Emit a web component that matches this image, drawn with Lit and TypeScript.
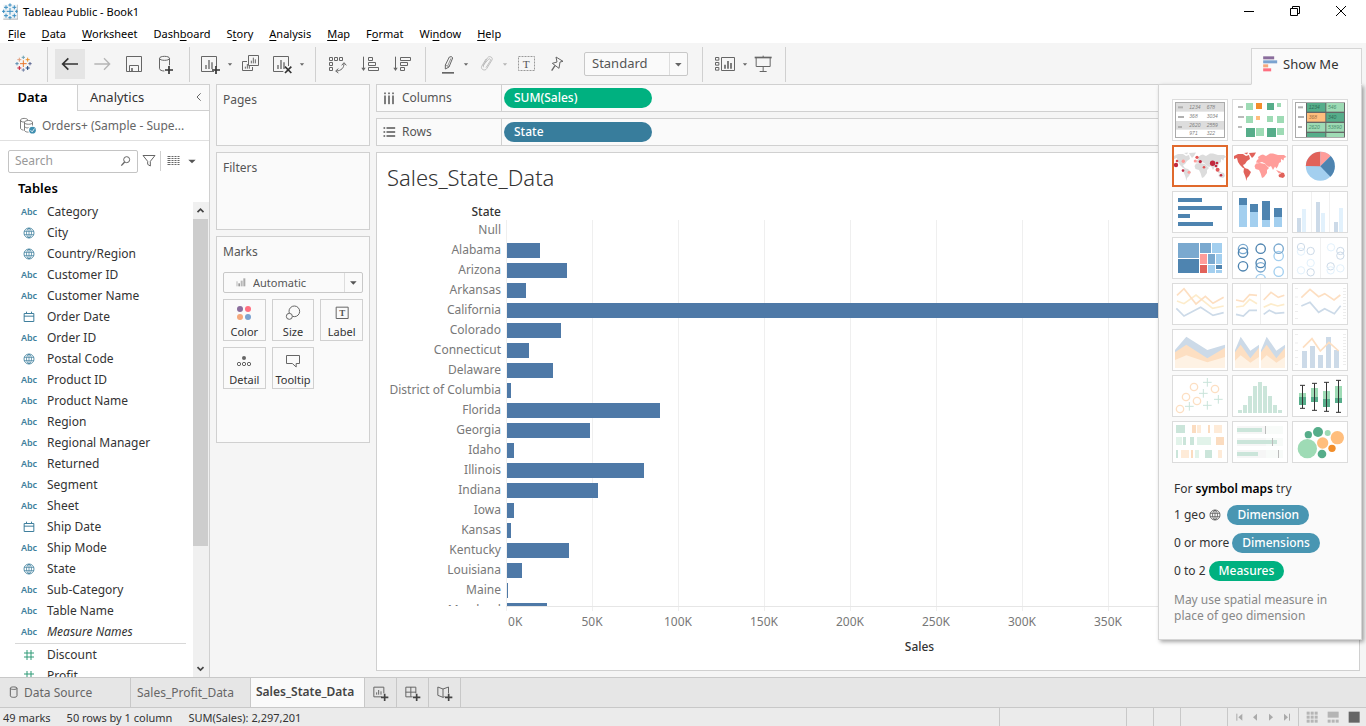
import { LitElement, html, svg, css, nothing } from "lit";
import { customElement, state } from "lit/decorators.js";
import { classMap } from "lit/directives/class-map.js";

/* Icon artwork is drawn on a fine grid of three units per CSS pixel. */
const icon = (w: number, h: number, cx: number, cy: number, art: unknown, cls = "") =>
  html`<svg class=${"ico " + cls} width=${w} height=${h} viewBox="${cx - w * 1.5} ${cy - h * 1.5} ${w * 3} ${h * 3}" aria-hidden="true">${art}</svg>`;

const line = (d: string, color = "#666", width = 3) =>
  svg`<path d=${d} fill="none" stroke=${color} stroke-width=${width}></path>`;
const area = (d: string, color: string) => svg`<path d=${d} fill=${color}></path>`;
const box = (x: number, y: number, w: number, h: number, color: string) =>
  svg`<rect x=${x} y=${y} width=${w} height=${h} fill=${color}></rect>`;
const dot = (x: number, y: number, r: number, color: string) =>
  svg`<circle cx=${x} cy=${y} r=${r} fill=${color}></circle>`;
const ring = (x: number, y: number, r: number, color: string, width = 3) =>
  svg`<circle cx=${x} cy=${y} r=${r} fill="none" stroke=${color} stroke-width=${width}></circle>`;
const plus = (x: number, y: number, r: number, color: string, width = 3) =>
  line(`M${x - r} ${y}H${x + r}M${x} ${y - r}V${y + r}`, color, width);

const logo = (x: number, y: number, c: string[]) => svg`
  ${plus(x, y, 10, c[0], 3)}
  ${plus(x, y - 19, 5, c[1], 3)}${plus(x, y + 19, 5, c[2], 3)}
  ${plus(x - 19, y, 5, c[3], 3)}${plus(x + 20, y, 5, c[4], 3)}
  ${plus(x - 12, y - 12, 6, c[5], 3)}${plus(x + 13, y - 12, 6, c[6], 3)}
  ${plus(x - 12, y + 13, 6, c[7], 3)}${plus(x + 13, y + 13, 6, c[8], 3)}`;

const caret = (color = "#666") => icon(8, 24, 12, 36, area("M5.500 34H18.500L12 41Z", color));
const bars = (x: number, y: number) => line(`M${x} ${y - 12}V${y}M${x + 9} ${y - 27}V${y}M${x + 18} ${y - 20}V${y}`, "#666", 4);

const I = {
  back: icon(24, 24, 210, 192, line("M189 192H234M205 175L188 192L205 209", "#333", 5)),
  forward: icon(24, 24, 306, 192, line("M283 192H328M312 175L329 192L312 209", "#b5b5b5", 4)),
  save: icon(24, 24, 402, 192, [line("M379.500 169.500H424.500V214.500H379.500Z"), line("M388.500 214V196.500H415.500V214"), line("M396 204V213", "#666", 5)]),
  source: icon(24, 24, 498, 192, [
    line("M478.500 175C478.500 167 508.500 167 508.500 175C508.500 183 478.500 183 478.500 175V206C478.500 210 486 213 493 213M508.500 175V196"),
    plus(507, 210, 12, "#333", 5),
  ]),
  addSheet: icon(24, 24, 630, 192, [line("M642 214.500H604.500V169.500H649.500V200"), bars(618, 207), plus(648, 210, 12, "#333", 5)]),
  duplicate: icon(26, 24, 753, 192, [
    line("M748.500 166.500H778.500V196.500H748.500Z"), line("M757 182V190M763 173V190M769 178V190"),
    line("M744 184.500H730.500V211.500H760.500V201"), line("M739 200V206M745 192V206M751 198V206"),
  ]),
  clear: icon(24, 24, 846, 192, [line("M850 214.500H820.500V169.500H865.500V198"), bars(834, 207), line("M855 200L874 219M874 200L855 219", "#333", 5)]),
  swap: icon(24, 24, 1011, 192, [
    line("M988.500 172.500h9v9h-9zM1003.500 172.500h9v9h-9zM1018.500 172.500h9v9h-9zM988.500 187.500h9v9h-9zM988.500 202.500h9v9h-9z"),
    line("M1032 190C1032 204 1024 212 1009 213M1025 196L1032 188L1039 196M1015 206L1007 213L1015 219"),
  ]),
  sortAsc: icon(24, 24, 1107, 192, [line("M1090.500 170V208"), area("M1084 203H1097L1090.500 213Z", "#666"), line("M1105.500 172.500h12v9h-12zM1105.500 187.500h21v9h-21zM1105.500 202.500h30v9h-30z")]),
  sortDesc: icon(24, 24, 1203, 192, [line("M1186.500 170V208"), area("M1180 203H1193L1186.500 213Z", "#666"), line("M1201.500 172.500h30v9h-30zM1201.500 187.500h21v9h-21zM1201.500 202.500h12v9h-12z")]),
  pen: icon(24, 24, 144, 72, [line("M148 51Q156 47 158 54L147 81L136 87V75Z"), line("M136 75L147 81M143 78L153 55", "#666", 2), box(126, 96, 36, 5, "#666")]),
  clip: icon(24, 24, 255, 72, line("M243 78L256 54C261 46 274 51 270 60L254 86C250 94 235 89 239 79L252 57M246 82C242 80 244 76 247 72L259 58C263 54 268 58 264 64L252 83", "#b5b5b5", 2.5)),
  text: icon(24, 24, 381, 72, [
    svg`<rect x="358.500" y="49.500" width="48" height="42" fill="none" stroke="#999" stroke-width="3" stroke-dasharray="6 3"></rect>`,
    svg`<text x="382" y="83" text-anchor="middle" font-family="Liberation Serif, serif" font-size="34" fill="#555">T</text>`,
  ]),
  pin: icon(24, 24, 471, 72, [line("M468 51L489 64L480 66L477 85L457 70L471 66Z"), line("M465 77L455 92", "#666", 4)]),
  cards: icon(26, 24, 978, 72, [
    line("M949.500 52.500h10v8h-10zM949.500 67.500h10v8h-10zM949.500 82.500h10v8h-10z"), line("M967.500 52.500H1006.500V91.500H967.500Z"),
    line("M978 74V86M987 63V86M996 69V86", "#666", 5),
  ]),
  present: icon(24, 24, 1096, 72, [line("M1071 52.500H1122", "#666", 5), line("M1075.500 53V79.500H1117.500V53M1096.500 47V52M1096.500 80V94M1086 94.500H1107")]),
};

const globe = (color: string) => icon(12, 12, 18, 18, [ring(18, 18, 15, color, 2.6), line("M18 3V33M3.500 13H32.500M3.500 23H32.500M18 3C8 10 8 26 18 33M18 3C28 10 28 26 18 33", color, 2.2)]);
const fieldIcon: Record<string, unknown> = {
  abc: html`<span class="abc">Abc</span>`,
  geo: globe("#3f7f9d"),
  date: icon(12, 12, 18, 18, line("M3.500 7.500H32.500V31.500H3.500ZM3 15.500H33M10.500 2V8M25.500 2V8", "#3f7f9d")),
  num: icon(12, 12, 18, 18, line("M12 3V33M24 3V33M3 12H33M3 24H33", "#2f9a77", 3)),
};

const FIELDS: [string, string][] = [
  ["abc", "Category"], ["geo", "City"], ["geo", "Country/Region"], ["abc", "Customer ID"], ["abc", "Customer Name"],
  ["date", "Order Date"], ["abc", "Order ID"], ["geo", "Postal Code"], ["abc", "Product ID"], ["abc", "Product Name"],
  ["abc", "Region"], ["abc", "Regional Manager"], ["abc", "Returned"], ["abc", "Segment"], ["abc", "Sheet"],
  ["date", "Ship Date"], ["abc", "Ship Mode"], ["geo", "State"], ["abc", "Sub-Category"], ["abc", "Table Name"], ["abc", "Measure Names"],
];
const MEASURES: [string, string][] = [["num", "Discount"], ["num", "Profit"]];

const SALES: [string, number][] = [
  ["Null", 0], ["Alabama", 19511], ["Arizona", 35282], ["Arkansas", 11300], ["California", 457688], ["Colorado", 31500],
  ["Connecticut", 13000], ["Delaware", 27000], ["District of Columbia", 2500], ["Florida", 89200], ["Georgia", 48500], ["Idaho", 4382],
  ["Illinois", 80000], ["Indiana", 53100], ["Iowa", 4300], ["Kansas", 2500], ["Kentucky", 36200], ["Louisiana", 9000], ["Maine", 800], ["Maryland", 23500],
];
const STEP = 86;

const land = [
  "M2 11L6 9L11 9L14 11L17 10L18 14L15 16L13 19L11 20L12 22L14 24L11 23L8 20L6 17L5 13L2 14Z",
  "M12 8L16 7.500L15 9.500ZM17 8L24 7.500L22 11L20 13L18 10Z",
  "M12 23L16 24L19 27L17 31L15 33L14.500 36L13.500 32L11.500 27Z",
  "M22.500 21L24 18.500L28 18L33 19L37 23L35 25L35 28L32 32L30 33L28.500 28L27 25L23.500 24Z",
  "M24 17.500L25 15L26.500 14L26 12L29 10L31 9.500L34 11L38 8.500L41 8.500L46 10L52 10L54.500 12L52 13L51.500 15.500L49 14L49 17L47 18L46 21L44.500 23.500L43 21.500L41 25L39 21L37 22L34 20L33 18.500L30 17L27 18Z",
  "M44 25L47 26L50 27.500L47 28.500Z",
  "M46.500 30L50 27.500L52 28L53 31L51 33L47 32Z",
];
const spots: [number, number, number, string][] = [
  [4, 20, 2.2, "#c2293f"], [5, 16, 1.3, "#d8494f"], [11.3, 16.3, 1.7, "#ff9d9a"], [25, 12.3, 1.6, "#e15759"], [23.3, 16, 1.6, "#ff9d9a"],
  [28.3, 16.6, 1.6, "#c2293f"], [40.6, 18.3, 2.7, "#c2293f"], [45, 18, 1.3, "#c2293f"], [44, 21, 1.3, "#c2293f"], [45.600, 24.800, 2, "#e15759"],
  [32, 22.300, 1.3, "#e15759"], [11, 25.600, 1.3, "#c2293f"], [17, 27.300, 1.5, "#ff9d9a"], [49, 30.300, 1.3, "#c2293f"],
];
const num = (x: number, y: number, t: string, c = "#808080") =>
  svg`<text x=${x} y=${y} font-family="Liberation Sans, sans-serif" font-style="italic" font-size="15" fill=${c}>${t}</text>`;

const B = "#4e84b0", M = "#7aa9cf", L = "#a3cfef", DG = "#56ad8a", LG = "#9edbb5";

/* Each chart type: name, artwork origin, artwork. */
const CHARTS: [string, number, number, unknown][] = [
  ["text table", 66, 297, [
    box(75, 306, 150, 108, "#aaa"), box(78, 309, 144, 102, "#fff"), box(78, 309, 144, 26, "#ddd"), box(78, 363, 144, 26, "#ddd"),
    box(84, 319, 15, 6, "#b0b0b0"), box(84, 348, 18, 6, "#b0b0b0"), box(84, 378, 12, 6, "#b0b0b0"),
    num(118, 328, "1234"), num(170, 328, "678"), num(118, 355, "368"), num(170, 355, "3034"),
    num(118, 382, "2620"), num(170, 382, "2559"), num(118, 406, "971"), num(170, 406, "322"),
  ]],
  ["heat map", 246, 297, [
    box(264, 318, 15, 6, "#bbb"), box(264, 348, 18, 6, "#bbb"), box(264, 378, 12, 6, "#bbb"),
    box(288, 309, 21, 21, LG), box(318, 309, 18, 18, "#f28e2b"), box(351, 309, 21, 21, DG), box(381, 309, 12, 12, LG),
    box(288, 348, 21, 21, LG), box(318, 348, 12, 12, "#ffbe7d"), box(351, 348, 18, 18, LG), box(381, 348, 21, 21, LG),
    box(288, 384, 27, 27, DG), box(318, 384, 24, 24, LG), box(351, 384, 27, 27, DG), box(381, 384, 21, 21, LG),
  ]],
  ["highlight table", 426, 297, [
    box(435, 306, 150, 108, "#aaa"), box(438, 309, 30, 102, "#fff"), box(468, 309, 117, 102, "#666"),
    box(471, 309, 55, 26, DG), box(529, 309, 53, 26, LG), box(471, 339, 55, 26, "#ffbe7d"), box(529, 339, 53, 26, DG),
    box(471, 369, 55, 26, LG), box(529, 369, 53, 26, LG), box(471, 399, 55, 12, DG), box(529, 399, 53, 12, LG),
    box(444, 319, 15, 6, "#b0b0b0"), box(444, 348, 18, 6, "#b0b0b0"), box(444, 378, 12, 6, "#b0b0b0"),
    num(476, 327, "1234", "#2f6b54"), num(534, 327, "546", "#488d6c"), num(476, 357, "368", "#9a6a3c"), num(534, 357, "340", "#2f6b54"),
    num(476, 387, "2620", "#488d6c"), num(534, 387, "53890", "#488d6c"),
  ]],
  ["symbol map", 66, 435, svg`<g transform="translate(66 435) scale(3)">${land.map((d) => area(d, "#dcdcdc"))}${spots.map((s) => dot(...s))}</g>`],
  ["filled map", 246, 435, svg`<g transform="translate(246 435) scale(3)">${land.map((d, i) => area(d, [3, 4, 5].includes(i) ? "#ff9d9a" : "#e1625a"))}</g>`],
  ["pie chart", 426, 435, [
    dot(511, 499, 43.500, L), area("M511 499V455.500A43.500 43.500 0 0 0 467.500 498Z", "#e1625a"),
    area("M511 499V455.500A43.500 43.500 0 0 1 542 468Z", "#ff9d9a"), area("M511 499L542 468A43.500 43.500 0 0 1 541 530Z", B),
  ]],
  ["horizontal bars", 66, 573, [box(84, 594, 72, 12, B), box(84, 618, 132, 12, B), box(84, 642, 36, 12, B), box(84, 666, 105, 12, B)]],
  ["stacked bars", 246, 573, [
    box(267, 594, 24, 21, B), box(267, 615, 24, 66, L), box(300, 612, 24, 24, B), box(300, 636, 24, 45, L),
    box(336, 603, 24, 57, B), box(336, 660, 24, 21, L), box(372, 624, 24, 27, B), box(372, 651, 24, 30, L),
  ]],
  ["side-by-side bars", 426, 573, [
    box(483, 576, 3, 120, "#f0f0f0"), box(537, 576, 3, 120, "#f0f0f0"),
    box(441, 654, 12, 42, "#ccdae8"), box(456, 627, 12, 69, "#e2f1fc"), box(498, 606, 12, 90, "#ccdae8"), box(513, 639, 12, 57, "#e2f1fc"),
    box(552, 666, 12, 30, "#ccdae8"), box(567, 624, 12, 72, "#e2f1fc"),
  ]],
  ["treemap", 66, 6, [
    box(84, 24, 63, 45, M), box(84, 72, 63, 42, B), box(150, 24, 33, 30, M), box(186, 24, 30, 30, L),
    box(150, 57, 21, 30, "#ff9d9a"), box(174, 57, 21, 30, M), box(198, 57, 18, 30, L),
    box(150, 90, 21, 24, "#e1625a"), box(174, 90, 21, 24, L), box(198, 90, 18, 12, B), box(198, 105, 18, 9, L),
  ]],
  ["circle views", 246, 6, [
    ring(279, 42, 14, M, 4), ring(279, 53, 14, B, 4), ring(279, 94, 14, B, 4), ring(332, 41, 14, B, 4), ring(332, 97, 14, M, 4), ring(332, 84, 14, B, 4),
    ring(332, 132, 14, L, 4), ring(386, 63, 14, L, 4), ring(386, 41, 14, M, 4), ring(386, 110, 14, L, 4),
  ]],
  ["side-by-side circles", 426, 6, [
    box(510, 9, 3, 120, "#f0f0f0"), ring(453, 50, 11, "#e2f1fc"), ring(453, 36, 11, "#ccdae8"), ring(482, 48, 11, "#ccdae8"),
    ring(482, 84, 11, "#e2f1fc"), ring(453, 106, 11, "#e2f1fc"), ring(482, 112, 11, "#ccdae8"),
    ring(543, 37, 11, "#e2f1fc"), ring(571, 48, 11, "#ccdae8"), ring(571, 62, 11, "#ccdae8"),
    ring(542, 94, 11, "#ccdae8"), ring(542, 106, 11, "#e2f1fc"), ring(571, 100, 11, "#e2f1fc"),
  ]],
  ["continuous lines", 66, 144, [
    line("M81 198L102 206L138 180L188 220L221 213", "#fdeccb", 5), line("M81 181L102 161L138 207L166 184L189 205L221 187", "#fddfc2", 5),
    line("M79 220L102 243L152 217L189 241L221 233", "#ccdae8", 5),
  ]],
  ["discrete lines", 246, 144, [
    box(330, 147, 3, 120, "#eee"), line("M258 195L280 200L299 179L321 181M341 195L363 172L385 187L403 181", "#fddfc2", 5),
    line("M258 216L280 213L299 193L321 206M341 217L363 207L383 213L403 208", "#fdeccb", 5),
    line("M258 238L280 243L298 226L321 226M341 238L358 226L377 235L403 233", "#ccdae8", 5),
  ]],
  ["dual lines", 426, 144, [
    line("M454 188L480 163L506 185L524 176L552 195L571 180", "#fddfc2", 5), line("M454 213L480 202L506 232L524 221L553 236L572 212", "#ccdae8", 5),
    [160, 185, 208, 229, 250].map((y) => box(435, y, 9, 2, "#e5e5e5")), [160, 169, 178, 187, 196, 205, 214, 223, 232, 241, 250].map((y) => box(579, y, 9, 2, "#e5e5e5")),
  ]],
  ["continuous area", 66, 282, [
    area("M75 345L109 305L172 345L225 329V399H75Z", "#ccdae8"), area("M75 352L109 329L172 370L225 338V399H75Z", "#fddfc2"), area("M75 375L109 361L172 382L225 366V399H75Z", "#fef2e4"),
  ]],
  ["discrete area", 246, 282, [255, 333].map((x) => [
    area(`M${x} 346L${x + 17} 305L${x + 46} 347L${x + 72} 329V399H${x}Z`, "#ccdae8"),
    area(`M${x} 352L${x + 17} 329L${x + 46} 370L${x + 72} 338V399H${x}Z`, "#fddfc2"),
    area(`M${x} 377L${x + 17} 361L${x + 46} 383L${x + 72} 366V399H${x}Z`, "#fef2e4"),
  ])],
  ["dual combination", 426, 282, [
    box(456, 348, 15, 51, "#ccdae8"), box(480, 333, 15, 66, "#ccdae8"), box(504, 360, 15, 39, "#ccdae8"), box(528, 306, 15, 93, "#ccdae8"), box(552, 345, 15, 54, "#ccdae8"),
    line("M459 338L486 311L511 348L537 322L566 348", "#fddfc2", 5),
    [298, 323, 346, 367, 388].map((y) => box(435, y, 9, 2, "#e5e5e5")), [298, 307, 316, 325, 334, 343, 352, 361, 370, 379, 388].map((y) => box(579, y, 9, 2, "#e5e5e5")),
  ]],
  ["scatter plot", 66, 420, [
    [[132, 456], [195, 462], [108, 486], [141, 498], [90, 522]].map(([x, y]) => ring(x, y, 11, "#fddfc2", 4)),
    [[172, 442], [160, 475], [205, 493], [118, 514], [172, 511]].map(([x, y]) => plus(x, y, 13, "#c9e4da", 3)),
  ]],
  ["histogram", 246, 420, [
    [264, 525], [279, 510], [294, 483], [309, 453], [324, 441], [339, 453], [354, 483], [369, 510], [384, 525],
  ].map(([x, y]) => box(x, y, 12, 534 - y, "#cbe5da"))],
  ["box-and-whisker plot", 426, 420, [
    [447, 474, 486, 510, 451, 520], [483, 459, 486, 501, 445, 526], [519, 468, 492, 516, 442, 529], [555, 453, 489, 504, 436, 532],
  ].map(([x, a, b, c, t, u]) => [
    box(x, a, 21, b - a, LG), box(x, b, 21, c - b, DG), line(`M${x + 3} ${t}H${x + 18}M${x + 10.500} ${t}V${u}M${x + 3} ${u}H${x + 18}`, "#333", 3),
  ])],
  ["Gantt chart", 66, 558, [
    box(78, 570, 27, 24, "#cbe5da"), box(126, 570, 12, 24, "#fbdcc0"), box(141, 570, 12, 24, "#feebd8"), box(174, 570, 6, 24, "#fbdcc0"), box(192, 570, 24, 24, "#feebd8"),
    box(78, 606, 18, 24, "#e2f3ea"), box(99, 606, 9, 24, "#cbe5da"), box(120, 606, 12, 24, "#cbe5da"), box(141, 606, 42, 24, "#e2f3ea"), box(198, 606, 24, 24, "#fbdcc0"),
    box(78, 645, 6, 24, "#cbe5da"), box(93, 645, 24, 24, "#feebd8"), box(123, 645, 6, 24, "#fbdcc0"), box(135, 645, 12, 24, "#e2f3ea"), box(165, 645, 21, 24, "#cbe5da"), box(204, 645, 12, 24, "#feebd8"),
  ]],
  ["bullet graph", 246, 558, [
    [573, 75, 346], [609, 120, 367], [645, 63, 385],
  ].map(([y, w, m]) => [box(261, y, 138, 24, "#f8fbf9"), box(261, y, 87, 24, "#f6f6f6"), box(261, y + 6, w, 12, "#cbe5da"), box(m - 1, y, 3, 24, "#bbb")])],
  ["packed bubbles", 426, 558, [
    dot(472, 641, 29, LG), dot(475, 599, 11, DG), dot(504, 591, 15, DG), dot(533, 594, 9, LG), dot(562, 608, 20, "#ffbe7d"),
    dot(518, 624, 17, "#ffbe7d"), dot(546, 640, 11, "#f28e2b"), dot(516, 657, 13, DG),
  ]],
];

const MENUS: [string, string, string][] = [
  ["", "F", "ile"], ["", "D", "ata"], ["", "W", "orksheet"], ["Dash", "b", "oard"], ["S", "t", "ory"],
  ["", "A", "nalysis"], ["", "M", "ap"], ["F", "o", "rmat"], ["Wi", "n", "dow"], ["", "H", "elp"],
];

@customElement("app-root")
export class AppRoot extends LitElement {
  @state() private chart = "symbol map";

  static styles = css`
    :host { display: flex; flex-direction: column; height: 100vh; overflow: hidden; position: relative; background: #f5f5f5; color: #333; font: 12px/16px "Noto Sans", "Open Sans", sans-serif; }
    * { box-sizing: border-box; }
    button, select, input { font: inherit; color: inherit; margin: 0; padding: 0; border: 0; background: none; border-radius: 0; }
    .ico { display: block; flex: none; }

    .title { display: flex; align-items: center; height: 24px; padding: 0 2px; background: #fff; color: #000; font-size: 11px; flex: none; }
    .title h1 { font: inherit; margin: 0 0 0 5px; flex: 1; }
    .title button { width: 46px; height: 21px; align-self: flex-start; display: grid; place-items: center; }
    .menu { display: flex; height: 19px; background: #fff; color: #000; font-size: 11px; line-height: 19px; flex: none; }
    .menu button { padding: 0 8px; white-space: nowrap; }
    .menu u { text-underline-offset: 2px; }

    .toolbar { display: flex; align-items: flex-start; height: 41px; flex: none; }
    .group { display: flex; height: 35px; margin-top: 4px; padding: 2px 7px 0 6px; border-right: 1px solid #d0d0d0; }
    .group button { width: 30px; height: 30px; margin: 0 1px; display: grid; place-items: center; }
    .group button.on { background: #e5e5e5; }
    .group button.drop { width: 8px; margin: 0; }
    .group button.tight { width: 28px; margin: 0; }
    .brand { padding-left: 8px; padding-right: 7px; }
    .sheet { padding-left: 4px; padding-right: 9px; }
    .order { padding-left: 5px; padding-right: 8px; }
    .format { padding-left: 8px; padding-right: 14px; gap: 3px; }
    .split { display: flex; }
    .view-tools { padding-left: 6px; padding-right: 8px; }
    .pick { display: grid; grid-template-columns: 1fr 18px; border: 1px solid #c8c8c8; border-radius: 2px; background: #fafafa; color: #555; }
    .pick select { grid-area: 1 / 1 / 2 / 3; appearance: none; outline: none; }
    .pick .ico { grid-area: 1 / 2; pointer-events: none; border-left: 1px solid #ddd; place-self: stretch; width: 18px; height: 100%; }
    .format .fit { width: 104px; height: 24px; margin: 3px 0 0 10px; font-size: 13px; }
    .fit select { padding: 0 0 2px 7px; }

    .work { flex: 1; min-height: 0; display: grid; grid-template-columns: 210px 154px 1fr; column-gap: 6px; padding-right: 6px; }

    .pane { display: flex; flex-direction: column; min-height: 0; background: #fff; border: 1px solid #d0d0d0; border-width: 1px 1px 0 0; }
    .pane-tabs { display: flex; font-size: 13px; height: 26px; flex: none; }
    .pane-tabs button { padding-bottom: 2px; }
    .pane-tabs button:first-child { width: 77px; padding-right: 12px; font-weight: 600; color: #000; }
    .pane-tabs button:last-child { flex: 1; display: flex; align-items: center; justify-content: space-between; padding: 0 6px 1px 12px; background: #fafafa; border: 1px solid #d0d0d0; border-width: 0 0 1px 1px; }
    .source { display: flex; align-items: center; gap: 6px; height: 30px; padding-left: 19px; border-bottom: 1px solid #e0e0e0; color: #666; flex: none; width: 100%; }
    .find { display: flex; align-items: center; height: 38px; padding: 2px 0 0 8px; flex: none; }
    .find label { display: flex; align-items: center; width: 130px; height: 23px; border: 1px solid #c4c4c4; border-radius: 2px; padding: 0 5px 0 6px; }
    .find input { width: 100%; min-width: 0; outline: none; }
    .find input::placeholder { color: #999; }
    .find button { display: grid; place-items: center; width: 22px; height: 20px; }
    .find button.list { width: 41px; border-left: 1px solid #d0d0d0; display: flex; align-items: center; gap: 7px; padding-left: 6px; }
    h2 { font: 600 13px/18px "Noto Sans", "Open Sans", sans-serif; color: #000; margin: 0; padding-left: 18px; height: 23px; flex: none; }
    .lists { display: flex; flex: 1; min-height: 0; }
    .fields { flex: 1; overflow: hidden; }
    ul { list-style: none; margin: 0; padding: 0; }
    .fields ul + ul { border-top: 1px solid #d8d8d8; padding-top: 1px; margin: 0 7px 0 15px; }
    .fields ul + ul li { padding-left: 5px; }
    .fields li { display: grid; grid-template-columns: 18px 1fr; column-gap: 9px; align-items: center; height: 21px; padding: 0 0 2px 20px; white-space: nowrap; }
    .fields li .ico { justify-self: center; margin-top: 1px; }
    .fields li.names { font-style: italic; }
    .abc { font: 600 9px/12px "Noto Sans", sans-serif; color: #3f7f9d; text-align: center; padding-top: 1px; }
    .scroll { width: 16px; background: #f0f0f0; display: flex; flex-direction: column; justify-content: space-between; flex: none; }
    .scroll button { display: grid; place-items: center; height: 17px; width: 15px; }
    .thumb { background: #cdcdcd; flex: 0 0 327px; width: 15px; margin-bottom: auto; }

    .cards { display: flex; flex-direction: column; gap: 6px; }
    .card { background: #fafafa; border: 1px solid #d0d0d0; padding: 7px 6px; color: #555; min-height: 62px; }
    .card.filters { min-height: 78px; }
    .card.marks { min-height: 207px; }
    .card h3, .shelf h3 { font: inherit; margin: 0; }
    .card .type { height: 21px; margin: 12px 0 6px; font-size: 11px; align-items: center; }
    .type select { padding-left: 29px; height: 19px; }
    .type .bars { grid-area: 1 / 1; border: 0; width: 24px; height: 12px; place-self: center start; margin-left: 5px; }
    .marks-grid { display: grid; grid-template-columns: repeat(3, 1fr); gap: 6px; }
    .marks-grid button { height: 42px; border: 1px solid #d0d0d0; font-size: 11px; line-height: 14px; color: #333; display: flex; flex-direction: column; align-items: center; justify-content: flex-end; gap: 3px; padding-bottom: 1px; }

    .desk { display: flex; flex-direction: column; gap: 6px; min-width: 0; min-height: 0; padding-bottom: 6px; }
    .shelf { display: flex; height: 28px; flex: none; border: 1px solid #d0d0d0; background: #fafafa; color: #555; }
    .shelf h3 { display: flex; align-items: center; gap: 6px; width: 125px; padding-left: 6px; border-right: 1px solid #d0d0d0; }
    .pill { height: 20px; border-radius: 10px; color: #fff; font-weight: 500; line-height: 19px; text-align: left; padding: 0 10px; background: #4996b2; }
    .shelf .pill { width: 148px; margin: 3px 2px; padding-bottom: 1px; background: #387d9c; }
    .shelf .pill.green, .pill.green { background: #00b180; }
    .sheet-view { flex: 1; min-height: 0; display: flex; flex-direction: column; background: #fff; border: 1px solid #d0d0d0; padding: 10px 28px 15px 0; color: #787878; }
    .sheet-view h4 { font: 300 22px/28px "Noto Sans", "Open Sans", sans-serif; color: #333; margin: 0 0 13px; padding-left: 10px; }
    .head { width: 129px; padding-right: 5px; text-align: right; font-weight: 500; color: #333; }
    .plot { flex: 1; min-height: 0; display: grid; grid-template-columns: 129px 1fr; overflow: hidden; }
    .rules { grid-area: 1 / 2; display: flex; overflow: hidden; }
    .rules i { flex: none; width: 86px; border-left: 1px solid #efefef; }
    .rows { grid-area: 1 / 1 / 2 / 3; padding-top: 1px; height: 0; }
    .row { display: grid; grid-template-columns: 124px 1fr; column-gap: 6px; align-items: start; height: 20px; line-height: 18px; text-align: right; white-space: nowrap; }
    .bar { height: 15px; margin-top: 2px; background: #4e79a7; }
    .axis { margin-left: 129px; }
    .ticks { display: flex; height: 5px; overflow: hidden; border-top: 1px solid #e6e6e6; }
    .ticks i { flex: none; width: 86px; border-left: 1px solid #efefef; }
    .values { display: flex; overflow: hidden; padding-top: 3px; }
    .values span { flex: none; width: 86px; text-align: center; }
    .values span:first-child { width: 43px; text-align: left; padding-left: 2px; }
    .axis p { margin: 9px 0 0; padding-left: 2px; text-align: center; font-weight: 500; color: #333; }

    .sheets { display: flex; height: 31px; flex: none; background: #e6e6e6; border: 1px solid #c8c8c8; border-width: 1px 0; color: #666; }
    .sheets button { display: flex; align-items: center; gap: 5px; border-right: 1px solid #c8c8c8; padding: 0 6px; white-space: nowrap; }
    .sheets .db { width: 131px; padding-left: 8px; }
    .sheets .other { width: 120px; }
    .sheets .current { background: #fafafa; color: #444; font-weight: 600; width: 114px; padding: 0 5px 2px; }
    .sheets .new { width: 32px; padding: 0 3px; }
    .status { display: flex; align-items: center; gap: 16px; height: 18px; flex: none; background: #ebebeb; padding-left: 3px; font-size: 11px; line-height: 18px; }
    .status > span { padding-top: 1px; }
    .cells { display: flex; align-self: stretch; margin-left: auto; }
    .cells > span { border-left: 1px solid #c8c8c8; width: 27px; display: flex; align-items: center; justify-content: center; }
    .cells > span:first-child { width: 127px; }
    .cells > .c4 { width: 47px; }
    .cells > .nav { width: 71px; }
    .cells > .modes { width: 68px; }
    .cells button { display: block; }

    .show { position: absolute; top: 48px; right: 4px; width: 204px; display: flex; flex-direction: column; align-items: flex-end; }
    .show-tab { display: flex; align-items: center; gap: 5px; width: 111px; height: 37px; margin-bottom: -1px; padding: 0 0 6px 11px; background: #fafafa; border: 1px solid #d5d5d5; border-bottom-color: #fafafa; font-size: 13px; z-index: 1; }
    .show-body { width: 100%; background: #fafafa; border: 1px solid #d5d5d5; padding: 14px 13px 15px; box-shadow: 2px 2px 4px rgba(0, 0, 0, .35); }
    .types { display: grid; grid-template-columns: repeat(3, 56px); gap: 4px; margin-bottom: 18px; }
    .types button { height: 42px; border: 1px solid #dcdcdc; background: #fff; }
    .types button.on { border-color: #e0692c; box-shadow: inset 0 0 0 1px #e0692c; }
    .need { display: flex; align-items: center; height: 20px; margin: 8px 0 0 2px; }
    .need .pill { margin-left: 3px; }
    .need .ico { margin: 0 3px 0 4px; }
    .show-body p { margin: 0 0 0 2px; }
    .show-body p b { font-weight: 600; color: #000; }
    .show-body .note { margin-top: 11px; color: #888; white-space: nowrap; }
  `;

  private field = ([kind, name]: [string, string]) =>
    html`<li class=${name === "Measure Names" ? "names" : ""}>${fieldIcon[kind]}<span>${name}</span></li>`;

  render() {
    const blue = Array(9).fill("#3b8fc2");
    const steps = Array.from({ length: 10 }, (_, i) => i);
    return html`
      <header class="title">
        ${icon(16, 18, 29, 34, [box(9, 12, 45, 45, "#eef3f6"), logo(29, 32, blue), line("M9 55.500H52.500V12", "#999", 2)])}
        <h1>Tableau Public - Book1</h1>
        <button aria-label="Minimize">${icon(12, 12, 18, 18, line("M3 19.500H33", "#000"))}</button>
        <button aria-label="Restore">${icon(12, 12, 18, 18, line("M4.500 10.500H25.500V31.500H4.500ZM10.500 10V4.500H31.500V25.500H26", "#000"))}</button>
        <button aria-label="Close">${icon(12, 12, 18, 18, line("M3 3L33 33M33 3L3 33", "#000", 3))}</button>
      </header>
      <nav class="menu">${MENUS.map(([a, u, b]) => html`<button>${a}<u>${u}</u>${b}</button>`)}</nav>

      <div class="toolbar">
        <div class="group brand"><button aria-label="Start page">${icon(24, 24, 72, 192, logo(70, 191, ["#e8762c", "#6fa3b5", "#7280a5", "#5b8db0", "#5b6591", "#e0a080", "#eb9129", "#c72037", "#1f447e"]))}</button></div>
        <div class="group"><button class="on" aria-label="Undo">${I.back}</button><button aria-label="Redo">${I.forward}</button><button aria-label="Save">${I.save}</button><button aria-label="New data source">${I.source}</button></div>
        <div class="group sheet"><button aria-label="New worksheet">${I.addSheet}</button><button class="drop" aria-label="New options">${caret()}</button><button aria-label="Duplicate">${I.duplicate}</button><button aria-label="Clear sheet">${I.clear}</button><button class="drop" aria-label="Clear options">${caret()}</button></div>
        <div class="group order"><button aria-label="Swap rows and columns">${I.swap}</button><button aria-label="Sort ascending">${I.sortAsc}</button><button aria-label="Sort descending">${I.sortDesc}</button></div>
        <div class="group format">
          <div class="split"><button class="tight" aria-label="Highlight">${I.pen}</button><button class="drop" aria-label="Highlight options">${caret()}</button></div>
          <div class="split"><button class="tight" aria-label="Group members">${I.clip}</button><button class="drop" aria-label="Group options">${caret("#b5b5b5")}</button></div>
          <button class="tight" aria-label="Show mark labels">${I.text}</button>
          <button class="tight" aria-label="Fix axes">${I.pin}</button>
          <div class="pick fit"><select aria-label="Fit"><option>Standard</option></select>${icon(18, 22, 27, 33, area("M16 30H37L26.500 41Z", "#666"))}</div>
        </div>
        <div class="group view-tools"><button aria-label="Show or hide cards">${I.cards}</button><button class="drop" aria-label="Card options">${caret()}</button><button class="tight" aria-label="Presentation mode">${I.present}</button></div>
      </div>

      <main class="work">
        <section class="pane">
          <div class="pane-tabs">
            <button>Data</button>
            <button>Analytics ${icon(8, 14, 12, 21, line("M17 10L6 21L17 32"))}</button>
          </div>
          <button class="source">
            ${icon(17, 17, 83, 122, [
              line("M62 106C62 99 84 99 84 106M62 106V130C62 133 66 135 71 136M62 106C62 112 72 112 74 111", "#666", 2.5),
              line("M74 113C74 105 98 105 98 113C98 120 74 120 74 113V137C76 141 82 142 86 142M98 113V122M74 125C78 130 84 130 86 128", "#666", 2.5),
              dot(98, 136, 10, "#3f8fb0"), line("M92 136L97 141L104 131", "#fff", 2.5)])}
            Orders+ (Sample - Supe...
          </button>
          <div class="find">
            <label><input type="text" placeholder="Search" aria-label="Search">${icon(12, 12, 18, 18, [ring(20, 14, 9, "#666"), line("M14 21L4 32", "#666", 4)])}</label>
            <button aria-label="Filter">${icon(14, 14, 21, 21, line("M3 4.500H39L25 22V36L17 31V22Z"))}</button>
            <button class="list" aria-label="View options">
              ${icon(13, 12, 19, 18, [4.500, 10.500, 16.500, 22.500, 28.500].map((y) => line(`M1 ${y}H10M13 ${y}H19M22 ${y}H28M31 ${y}H37`, "#666", 3)))}
              ${icon(10, 8, 15, 12, area("M4 8H26L15 19Z", "#555"))}
            </button>
          </div>
          <h2>Tables</h2>
          <div class="lists">
            <div class="fields">
              <ul>${FIELDS.map(this.field)}</ul>
              <ul>${MEASURES.map(this.field)}</ul>
            </div>
            <div class="scroll">
              <button aria-label="Scroll up">${icon(9, 7, 13, 10, line("M4 15L13 6L22 15", "#444", 5))}</button>
              <div class="thumb"></div>
              <button aria-label="Scroll down">${icon(9, 7, 13, 10, line("M4 6L13 15L22 6", "#444", 5))}</button>
            </div>
          </div>
        </section>

        <aside class="cards">
          <section class="card"><h3>Pages</h3></section>
          <section class="card filters"><h3>Filters</h3></section>
          <section class="card marks">
            <h3>Marks</h3>
            <div class="pick type">
              <select aria-label="Mark type"><option>Automatic</option></select>
              ${icon(24, 12, 36, 18, [box(22, 13, 4, 15, "#c8c8c8"), box(28, 19, 5, 9, "#999"), box(35, 11, 6, 17, "#b8b8b8"), box(43, 4, 6, 24, "#aaa")], "bars")}
              ${icon(18, 19, 27, 28, area("M16 24H37L26.500 35Z", "#555"))}
            </div>
            <div class="marks-grid">
              <button>${icon(20, 18, 102, 249, [dot(90, 237, 9, "#8a6d9c"), dot(114, 237, 9, "#ff6f80"), dot(90, 261, 9, "#f5a87c"), dot(114, 261, 9, "#7ba3d0")])}Color</button>
              <button>${icon(20, 18, 249, 249, [ring(253, 244, 16, "#666"), svg`<circle cx="238" cy="259" r="9" fill="#fafafa" stroke="#666" stroke-width="3"></circle>`])}Size</button>
              <button>${icon(20, 18, 391, 249, [line("M373.500 231.500H409.500V265.500H373.500Z"), svg`<text x="391.500" y="258" text-anchor="middle" font-family="Liberation Serif, serif" font-size="27" font-weight="700" fill="#555">T</text>`])}Label</button>
              <button>${icon(20, 18, 102, 393, [dot(102, 384, 6, "#666"), ring(87, 402, 5, "#666"), ring(102, 402, 5, "#666"), ring(117, 402, 5, "#666")])}Detail</button>
              <button>${icon(20, 18, 249, 393, line("M229.500 376.500H268.500V400.500H258.500V411L247 400.500H229.500Z"))}Tooltip</button>
            </div>
          </section>
        </aside>

        <section class="desk">
          <div class="shelf">
            <h3>${icon(13, 13, 20, 20, [box(4, 2, 5, 5, "#666"), box(4, 11, 5, 26, "#666"), box(16, 2, 5, 5, "#666"), box(16, 11, 5, 26, "#666"), box(28, 2, 5, 5, "#666"), box(28, 11, 5, 26, "#666")])}Columns</h3>
            <button class="pill green">SUM(Sales)</button>
          </div>
          <div class="shelf">
            <h3>${icon(13, 13, 20, 20, [6, 18, 30].map((y) => [box(2, y - 2, 5, 5, "#666"), box(11, y - 2, 26, 5, "#666")]))}Rows</h3>
            <button class="pill">State</button>
          </div>
          <article class="sheet-view">
            <h4>Sales_State_Data</h4>
            <div class="head">State</div>
            <div class="plot">
              <div class="rules">${steps.map(() => html`<i></i>`)}</div>
              <div class="rows">
                ${SALES.map(([name, value]) => html`<div class="row"><span>${name}</span>${value ? html`<div class="bar" style="width:${Math.floor((value / 50000) * STEP)}px"></div>` : nothing}</div>`)}
              </div>
            </div>
            <div class="axis">
              <div class="ticks">${steps.map(() => html`<i></i>`)}</div>
              <div class="values">${steps.slice(0, 8).map((i) => html`<span>${i * 50}K</span>`)}</div>
              <p>Sales</p>
            </div>
          </article>
        </section>
      </main>

      <nav class="sheets">
        <button class="db">${icon(11, 13, 41, 66, line("M31.500 53C31.500 48 51.500 48 51.500 53C51.500 58 31.500 58 31.500 53V76C31.500 82 51.500 82 51.500 76V53"))}Data Source</button>
        <button class="other">Sales_Profit_Data</button>
        <button class="current">Sales_State_Data</button>
        <button class="new" aria-label="New worksheet">${icon(24, 24, 1142, 67, [line("M1147 78.500H1123.500V49.500H1153.500V68"), line("M1132 65V72M1138 58V72M1145 62V72"), plus(1156, 80, 11, "#444", 5)])}</button>
        <button class="new" aria-label="New dashboard">${icon(24, 24, 1238, 67, [line("M1240 78.500H1219.500V49.500H1249.500V68M1234.500 49V78M1219 64.500H1250"), plus(1252, 80, 11, "#444", 5)])}</button>
        <button class="new" aria-label="New story">${icon(24, 24, 1334, 67, [line("M1331 80L1315.500 74V49L1331 55V80L1336 78M1331 55L1347.500 49V68"), plus(1348, 80, 11, "#444", 5)])}</button>
      </nav>
      <footer class="status">
        <span>49 marks</span><span>50 rows by 1 column</span><span>SUM(Sales): 2,297,201</span>
        <div class="cells">
          <span></span><span></span><span></span><span class="c4"></span>
          <span class="nav">
            <button aria-label="First">${icon(16, 12, 266, 742, [box(258, 732, 3, 21, "#aaa"), area("M276 732V753L264 742.500Z", "#aaa")])}</button>
            <button aria-label="Previous">${icon(16, 12, 315, 742, area("M321 732V753L309 742.500Z", "#aaa"))}</button>
            <button aria-label="Next">${icon(16, 12, 363, 742, area("M357 732V753L369 742.500Z", "#aaa"))}</button>
            <button aria-label="Last">${icon(16, 12, 411, 742, [area("M402 732V753L414 742.500Z", "#aaa"), box(417, 732, 3, 21, "#aaa")])}</button>
          </span>
          <span class="modes">
            <button aria-label="Sheet sorter">${icon(20, 14, 487, 742, [471, 483, 495].map((x) => [726, 738, 750].map((y) => box(x, y, 9, 9, "#b5b5b5"))))}</button>
            <button aria-label="Filmstrip">${icon(22, 14, 550, 742, [box(534, 726, 33, 18, "#b5b5b5"), box(534, 750, 9, 9, "#b5b5b5"), box(546, 750, 9, 9, "#b5b5b5"), box(558, 750, 9, 9, "#b5b5b5")])}</button>
            <button aria-label="Single sheet">${icon(20, 14, 613, 742, box(597, 726, 33, 33, "#666"))}</button>
          </span>
        </div>
      </footer>

      <section class="show">
        <button class="show-tab">
          ${icon(15, 16, 361, 191, [box(339, 168, 33, 9, "#8a6d9c"), box(339, 180, 42, 9, "#7ba3d0"), box(339, 192, 15, 9, "#f5a87c"), box(339, 204, 24, 9, "#ff6f80")])}
          Show Me
        </button>
        <div class="show-body">
          <div class="types">
            ${CHARTS.map(([name, x, y, art]) => html`<button class=${classMap({ on: this.chart === name })} aria-label=${name} @click=${() => (this.chart = name)}>${icon(54, 40, x + 84, y + 63, art)}</button>`)}
          </div>
          <p>For <b>symbol maps</b> try</p>
          <div class="need">1 geo ${globe("#555")}<span class="pill">Dimension</span></div>
          <div class="need">0 or more<span class="pill">Dimensions</span></div>
          <div class="need">0 to 2<span class="pill green">Measures</span></div>
          <p class="note">May use spatial measure in<br>place of geo dimension</p>
        </div>
      </section>
    `;
  }
}
